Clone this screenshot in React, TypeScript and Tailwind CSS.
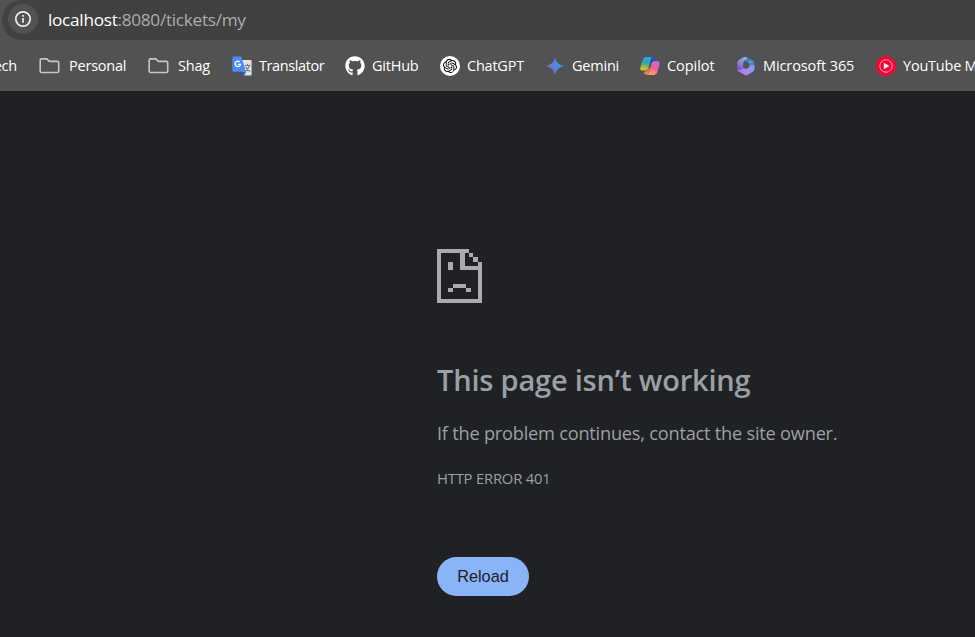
import type { ReactNode } from "react";
import { FaGithub } from "react-icons/fa";
import { SiOpenai } from "react-icons/si";

function FolderIcon() {
  return (
    <svg width="22" height="20" viewBox="0 0 22 20" fill="none" stroke="#c7c7c7" strokeWidth="1.6" strokeLinejoin="round">
      <path d="M2.5 2.9h5.3l2.5 2.5h8.2q1.2 0 1.2 1.2v8.6q0 1.3-1.2 1.3h-16q-1.3 0-1.3-1.3V4.2q0-1.3 1.3-1.3Z" />
    </svg>
  );
}

function TranslateIcon() {
  return (
    <svg width="20" height="20" viewBox="0 0 20 20">
      <path d="M8 4h10.3q1.3 0 1.3 1.3v13q0 1.3-1.3 1.3H12Z" fill="#dfe1e3" />
      <path d="M12.800 9.500h5.700M15.500 8v1.500M17.300 9.700q-1 4-4.300 6M13.800 11q1.500 3 4.500 4.600" stroke="#6c7c80" strokeWidth="1.1" fill="none" />
      <path d="m8.5 15.700 3.500 4 2-4Z" fill="#3057bb" />
      <path d="M1.8.5h7.500l4.700 15.300H1.800Q.4 15.800.4 14.400V1.900Q.4.5 1.800.5Z" fill="#4a8af4" />
      <path d="M7.800 6.100A2.700 2.700 0 1 0 8.500 8.300H5.900" fill="none" stroke="#fff" strokeWidth="1.3" />
    </svg>
  );
}

function GeminiIcon() {
  return (
    <svg width="20" height="20" viewBox="0 0 20 20">
      <defs>
        <linearGradient id="gemini" x1="1" y1="14" x2="19" y2="6" gradientUnits="userSpaceOnUse">
          <stop stopColor="#9670c6" />
          <stop offset=".4" stopColor="#5b7fd6" />
          <stop offset="1" stopColor="#27a5e8" />
        </linearGradient>
      </defs>
      <path d="M10 1.5Q11.700 8.300 18.500 10 11.700 11.700 10 18.500 8.300 11.700 1.500 10 8.300 8.300 10 1.500Z" fill="url(#gemini)" />
    </svg>
  );
}

function CopilotIcon() {
  return (
    <svg width="20" height="20" viewBox="0 0 20 20">
      <defs>
        <linearGradient id="cp-left" x1="6" y1="1" x2="4" y2="15" gradientUnits="userSpaceOnUse">
          <stop stopColor="#22a7ee" />
          <stop offset=".4" stopColor="#2aa3b4" />
          <stop offset=".7" stopColor="#8fc044" />
          <stop offset="1" stopColor="#f0c41f" />
        </linearGradient>
        <linearGradient id="cp-right" x1="17" y1="5" x2="12" y2="19" gradientUnits="userSpaceOnUse">
          <stop stopColor="#b673ee" />
          <stop offset=".5" stopColor="#ee5c9c" />
          <stop offset="1" stopColor="#ffa05c" />
        </linearGradient>
      </defs>
      <path d="M5.900 1h7.200q-1.500.3-2.200 2.600L8.200 12.400q-.8 2.200-3 2.200H2.500q-3.100 0-2-3.500L2.700 3.800Q3.600 1 5.900 1Z" fill="url(#cp-left)" />
      <path d="M9 1h4.100q1.500 0 2 1.600l.6 2h-1.400q-2.300 0-3 2.300l-.6 2.100-1-1 1.200-4.400Q11 1.600 12 1Z" fill="#2150c8" />
      <path d="M14.300 5.200h3q3.100 0 2.100 3.800l-2.100 7.200Q16.500 19 14.100 19H6.600q1.700-.3 2.400-2.600l2.500-8.700q.7-2.500 2.800-2.500Z" fill="url(#cp-right)" />
      <path d="M4.200 15.500h1.300q2.300-.1 3.100-2.700l.4-1.300.9 1-1.100 3.900Q8.100 19 6.200 19 4.700 19 4.200 17.200Z" fill="#f47b4a" />
    </svg>
  );
}

function Microsoft365Icon() {
  return (
    <svg width="20" height="20" viewBox="0 0 20 20">
      <defs>
        <linearGradient id="ms-left" x1="10" y1="1" x2="3" y2="15" gradientUnits="userSpaceOnUse">
          <stop stopColor="#7fb8ec" />
          <stop offset=".5" stopColor="#8c86dc" />
          <stop offset="1" stopColor="#6a4cc0" />
        </linearGradient>
        <linearGradient id="ms-top" x1="8" y1="2" x2="18" y2="12" gradientUnits="userSpaceOnUse">
          <stop stopColor="#3560a8" />
          <stop offset=".55" stopColor="#4f9ad8" />
          <stop offset="1" stopColor="#3157a8" />
        </linearGradient>
        <linearGradient id="ms-bottom" x1="4" y1="17" x2="18" y2="11" gradientUnits="userSpaceOnUse">
          <stop stopColor="#b874e4" />
          <stop offset=".5" stopColor="#a48df0" />
          <stop offset="1" stopColor="#7e9cf0" />
        </linearGradient>
      </defs>
      <path d="M8.500 1.200q1-.6 2.100-.2l6.200 3.500q1.700 1 1.700 3v5.600l-5-2.300V7.500L7.500 4Z" fill="url(#ms-top)" />
      <path d="M9.800.9 12 2.600 8.600 4.700Q7.200 5.600 7.200 7.200v5.300L4.400 14.200q-3.200 1-3.200-2.200V7q0-2 1.700-3L7.500 1.300Q8.800.6 9.800.9Z" fill="url(#ms-left)" />
      <path d="M18.500 10v2.800q0 2-1.700 3l-5 2.900q-1.700 1-3.400 0l-5-2.700q-1.900-1.100-2.200-3 1.300 1.700 3.300.7l3.200-1.700 2.300 1 3.500-2.100V9.500l4-.7q1-.2 1 1.200Z" fill="url(#ms-bottom)" />
    </svg>
  );
}

function YouTubeMusicIcon() {
  return (
    <svg width="20" height="20" viewBox="0 0 20 20">
      <circle cx="10" cy="10" r="10" fill="#ff0033" />
      <circle cx="10" cy="10" r="6.200" fill="none" stroke="#ffb4c0" strokeWidth="1" />
      <path d="m7.800 6.800 5.500 3.200-5.500 3.200Z" fill="#fff" />
    </svg>
  );
}

function Bookmark({ icon, label, className, gap = "gap-[7px]" }: { icon: ReactNode; label: string; className: string; gap?: string }) {
  return (
    <div className={`flex shrink-0 items-center ${gap} ${className}`}>
      <span className="shrink-0">{icon}</span>
      <span>{label}</span>
    </div>
  );
}

function SadPageIcon() {
  return (
    <svg width="45" height="54" viewBox="437 249 45 54" fill="#ababab" shapeRendering="crispEdges">
      <path d="M437 249h32v4h-28v46h37v-29h-18v-17h4.500v13H478v-4h4v41h-45Z" />
      <path d="M469 253h4v4h-4ZM473 257h5v5h-5ZM448 262h5v8h-5ZM453 284h13v4h-13ZM448 288h5v4h-5ZM466 288h5v4h-5Z" />
    </svg>
  );
}

export default function App() {
  return (
    <div className="flex h-[637px] w-[975px] flex-col overflow-hidden bg-[#202124] font-['Open_Sans','Noto_Sans',sans-serif]">
      <header className="h-[91px] shrink-0 bg-[#525252]">
        <div className="flex h-10 items-center pl-[2px]">
          <div className="flex h-10 flex-1 items-center rounded-l-full bg-[#414141] pl-[6px]">
            <span className="mb-[2px] flex size-[30px] items-center justify-center rounded-full bg-[#525252]">
              <svg width="18" height="18" viewBox="0 0 18 18" fill="none" stroke="#eeeeee" strokeWidth="1.7">
                <circle cx="9" cy="9" r="7.2" />
                <path d="M9 8v4.700M9 5v1.700" />
              </svg>
            </span>
            <span className="ml-[10px] whitespace-nowrap text-[17.2px] leading-6 tracking-[-0.28px] text-[#adadad]">
              <span className="text-white">localhost</span>:8080/tickets/my
            </span>
          </div>
        </div>
        <nav className="flex h-[51px] whitespace-nowrap text-[14.5px] leading-5 tracking-[-0.22px] text-white">
          <div className="flex w-[39px] shrink-0 items-center">
            <span className="flex w-[17px] justify-end overflow-hidden">Tech</span>
          </div>
          <Bookmark className="w-[109px]" gap="gap-2" icon={<FolderIcon />} label="Personal" />
          <Bookmark className="w-[84px]" gap="gap-2" icon={<FolderIcon />} label="Shag" />
          <Bookmark className="w-[113px] tracking-[-0.4px]" icon={<TranslateIcon />} label="Translator" />
          <Bookmark className="w-[95px]" icon={<FaGithub size={20} />} label="GitHub" />
          <Bookmark
            className="w-[105px]"
            icon={
              <span className="flex size-5 items-center justify-center rounded-full bg-white text-black">
                <SiOpenai size={14} />
              </span>
            }
            label="ChatGPT"
          />
          <Bookmark className="w-[95px]" icon={<GeminiIcon />} label="Gemini" />
          <Bookmark className="w-[96px] tracking-[-0.05px]" icon={<CopilotIcon />} label="Copilot" />
          <Bookmark className="w-[140px] tracking-[-0.1px]" icon={<Microsoft365Icon />} label="Microsoft 365" />
          <Bookmark className="w-[140px]" icon={<YouTubeMusicIcon />} label="YouTube Music" />
        </nav>
      </header>
      <main className="flex flex-1 flex-col items-start pl-[437px] pt-[158px] text-[#9aa0a6]">
        <SadPageIcon />
        <h1 className="mt-[58px] whitespace-nowrap text-[29px] font-semibold leading-[38px] tracking-[-0.2px]">This page isn’t working</h1>
        <p className="mt-[20px] whitespace-nowrap text-[18.2px] leading-7 tracking-[-0.22px]">If the problem continues, contact the site owner.</p>
        <p className="mt-[21px] whitespace-nowrap text-[14.8px] leading-5 tracking-[-0.2px]">HTTP ERROR 401</p>
        <button className="mt-[69px] h-[39px] w-[92px] rounded-full bg-[#8ab4f8] font-['Liberation_Sans',Arial,sans-serif] text-[16.3px] text-[#202124]">
          Reload
        </button>
      </main>
    </div>
  );
}
